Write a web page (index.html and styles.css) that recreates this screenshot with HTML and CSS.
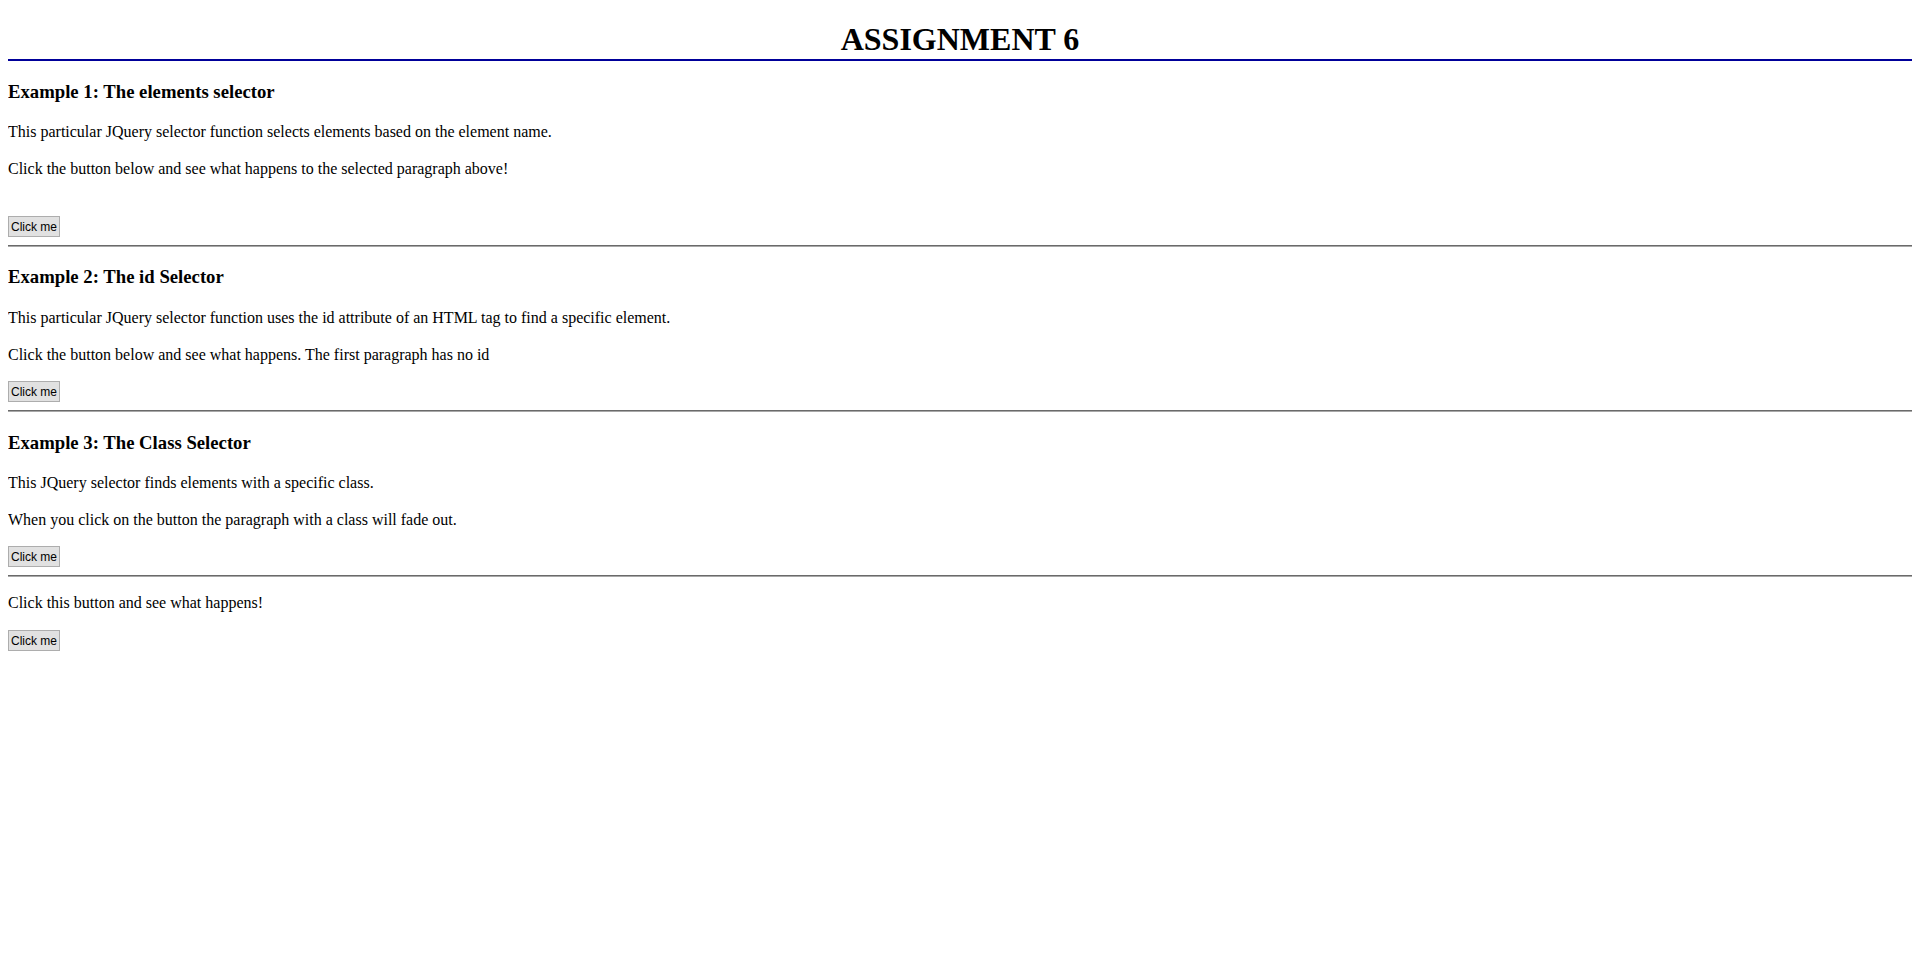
FILE: index.html
```html
<!DOCTYPE html>
<html>
<head>
<meta charset="utf-8">
<title>Assignment 6</title>
<link rel="stylesheet" href="styles.css">
</head>
<body class="page">
<h1 class="title">ASSIGNMENT 6</h1>

<h3 class="example-heading">Example 1: The elements selector</h3>
<p class="text">This particular JQuery selector function selects elements based on the element name.</p>
<p class="text">Click the button below and see what happens to the selected paragraph above!</p>
<br>
<button class="btn" type="button">Click me</button>
<hr class="divider">

<h3 class="example-heading">Example 2: The id Selector</h3>
<p class="text">This particular JQuery selector function uses the id attribute of an HTML tag to find a specific element.</p>
<p class="text">Click the button below and see what happens. The first paragraph has no id</p>
<button class="btn" type="button">Click me</button>
<hr class="divider">

<h3 class="example-heading">Example 3: The Class Selector</h3>
<p class="text">This JQuery selector finds elements with a specific class.</p>
<p class="text">When you click on the button the paragraph with a class will fade out.</p>
<button class="btn" type="button">Click me</button>
<hr class="divider">

<p class="text">Click this button and see what happens!</p>
<button class="btn" type="button">Click me</button>
</body>
</html>
```

FILE: styles.css
```css
html {
  background: #ffffff;
}

.page {
  margin: 0 8px 8px;
  padding: 0;
  font-family: "Liberation Serif", "Times New Roman", serif;
  font-size: 16px;
  line-height: 1.28;
  color: #000000;
}

.title {
  margin: 21.44px 0 17.5px;
  font-size: 32px;
  font-weight: bold;
  text-align: center;
  line-height: 37.5px;
  border-bottom: 2px solid #00009a;
}

.example-heading {
  margin: 18.72px 0;
  font-size: 18.72px;
  font-weight: bold;
  line-height: 1.28;
}

.text {
  margin: 16px 0;
}

.btn {
  box-sizing: border-box;
  height: 21px;
  margin: 0;
  padding: 1px 2px 0;
  font-family: "Liberation Sans", Arial, sans-serif;
  font-size: 12px;
  line-height: normal;
  color: #000000;
  background: #e1e1e1;
  border: 1px solid #adadad;
  border-radius: 0;
  vertical-align: top;
}

.divider {
  margin: 8px 0;
  border: 0;
  border-top: 1px solid #6a6a6a;
  border-bottom: 1px solid #a8a8a8;
  height: 0;
}
```
